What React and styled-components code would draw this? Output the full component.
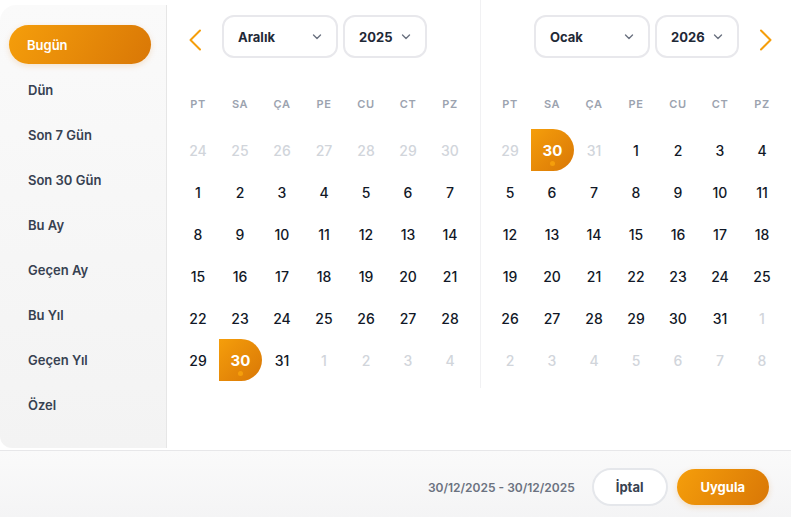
import React from "react";
import styled, { createGlobalStyle } from "styled-components";

const GlobalStyle = createGlobalStyle`
  html, body { margin: 0; padding: 0; background: #ffffff; }
  body { font-family: Inter, "Noto Sans", "Liberation Sans", sans-serif; -webkit-font-smoothing: antialiased; }
  * { box-sizing: border-box; }
`;

const Picker = styled.div`
  width: 791px;
  height: 517px;
  display: flex;
  flex-direction: column;
  background: #ffffff;
  overflow: hidden;
`;

const Body = styled.div`
  height: 450px;
  display: flex;
  align-items: flex-start;
`;

const Sidebar = styled.nav`
  width: 167px;
  height: 443px;
  margin-top: 5px;
  border-radius: 16px 0 0 12px;
  border-right: 1px solid #e6e6e6;
  background: linear-gradient(180deg, #fafafa 0%, #f3f3f3 100%);
  padding: 20px 15px 0 9px;
  display: flex;
  flex-direction: column;
  gap: 6px;
`;

const Preset = styled.button`
  height: 39px;
  border: none;
  border-radius: 20px;
  padding: 0 0 0 ${(p) => (p.$active ? 18 : 19)}px;
  text-align: left;
  font-family: inherit;
  font-size: 13px;
  font-weight: 600;
  cursor: pointer;
  color: ${(p) => (p.$active ? "#ffffff" : "#374151")};
  background: ${(p) =>
    p.$active ? "linear-gradient(120deg, #f59e0b 0%, #d97706 100%)" : "transparent"};
  box-shadow: ${(p) => (p.$active ? "0 2px 6px rgba(217, 119, 6, 0.18)" : "none")};
`;

const Months = styled.div`
  display: flex;
  align-items: flex-start;
`;

const MonthPanel = styled.section`
  width: ${(p) => p.$width}px;
  padding: 15px 0 7px ${(p) => p.$padLeft}px;
  border-right: ${(p) => (p.$divider ? "1px solid #f1f1f3" : "none")};
`;

const Header = styled.div`
  width: 295px;
  height: 43px;
  display: flex;
  align-items: center;
  margin-bottom: 31px;
`;

const NavButton = styled.button`
  width: 36px;
  height: 36px;
  margin-top: 7px;
  border: none;
  background: transparent;
  padding: 0;
  display: flex;
  align-items: center;
  justify-content: center;
  cursor: pointer;
  visibility: ${(p) => (p.$hidden ? "hidden" : "visible")};
`;

const Select = styled.div`
  width: ${(p) => p.$width}px;
  height: 43px;
  margin-left: ${(p) => p.$gap}px;
  border: 2px solid #e8e8ec;
  border-radius: 12px;
  background: #ffffff;
  padding: 0 14px 0 14px;
  display: flex;
  align-items: center;
  justify-content: space-between;
  font-size: 13px;
  font-weight: 700;
  color: #1f2937;
`;

const Spacer = styled.div`
  width: 9px;
`;

const Grid = styled.div`
  width: 294px;
  display: grid;
  grid-template-columns: repeat(7, 42px);
`;

const Weekday = styled.div`
  height: 30px;
  margin-bottom: 10px;
  display: flex;
  align-items: center;
  justify-content: center;
  font-size: 11px;
  font-weight: 600;
  letter-spacing: 0.6px;
  color: #9ca3af;
`;

const Day = styled.div`
  position: relative;
  height: 42px;
  display: flex;
  align-items: center;
  justify-content: center;
  font-size: ${(p) => (p.$selected ? 15 : 14)}px;
  font-weight: ${(p) => (p.$selected ? 700 : 500)};
  color: ${(p) => (p.$selected ? "#ffffff" : p.$muted ? "#d1d5db" : "#111827")};
  background: ${(p) =>
    p.$selected ? "linear-gradient(135deg, #f59e0b 0%, #d97706 100%)" : "transparent"};
  border-radius: ${(p) => (p.$selected ? "0 21px 21px 0" : "0")};
  margin-right: ${(p) => (p.$selected ? -1 : 0)}px;
`;

const TodayDot = styled.span`
  position: absolute;
  left: 50%;
  bottom: 5px;
  width: 5px;
  height: 5px;
  margin-left: -2.5px;
  border-radius: 50%;
  background: #f59e0b;
`;

const Footer = styled.footer`
  height: 67px;
  border-top: 1px solid #e7e7e9;
  background: linear-gradient(180deg, #fafafa 0%, #f4f4f5 100%);
  display: flex;
  align-items: center;
  justify-content: flex-end;
  padding: 6px 22px 0 0;
`;

const RangeText = styled.span`
  font-size: 12px;
  font-weight: 600;
  color: #6b7280;
  margin-right: 17px;
`;

const FooterButton = styled.button`
  height: ${(p) => (p.$primary ? 36 : 38)}px;
  padding: 0 ${(p) => (p.$primary ? 24 : 22)}px;
  margin-left: ${(p) => (p.$primary ? 9 : 0)}px;
  border-radius: 20px;
  font-family: inherit;
  font-size: 13px;
  font-weight: 700;
  cursor: pointer;
  color: ${(p) => (p.$primary ? "#ffffff" : "#374151")};
  border: ${(p) => (p.$primary ? "none" : "2px solid #e5e7eb")};
  background: ${(p) =>
    p.$primary ? "linear-gradient(120deg, #f59e0b 0%, #d97706 100%)" : "#ffffff"};
  box-shadow: ${(p) => (p.$primary ? "0 2px 6px rgba(217, 119, 6, 0.2)" : "none")};
`;

const Chevron = ({ dir }) => (
  <svg width="16" height="22" viewBox="0 0 16 22" fill="none">
    <path
      d={dir === "left" ? "M13 1.5 L3.5 11 L13 20.5" : "M3 1.5 L12.5 11 L3 20.5"}
      stroke="#f59e0b"
      strokeWidth="2"
      strokeLinecap="round"
      strokeLinejoin="round"
    />
  </svg>
);

const Caret = () => (
  <svg width="10" height="6" viewBox="0 0 10 6" fill="none">
    <path d="M1.5 1 L5 4.5 L8.5 1" stroke="#6b7280" strokeWidth="1.4" strokeLinecap="round" strokeLinejoin="round" />
  </svg>
);

const WEEKDAYS = ["PT", "SA", "ÇA", "PE", "CU", "CT", "PZ"];
const PRESETS = ["Bugün", "Dün", "Son 7 Gün", "Son 30 Gün", "Bu Ay", "Geçen Ay", "Bu Yıl", "Geçen Yıl", "Özel"];

// 6x7 month grid starting on Monday; a month that starts on Monday
// still shows the full previous week in its first row
function buildDays(year, month) {
  const first = new Date(year, month, 1);
  const offset = ((first.getDay() + 6) % 7) || 7;
  const days = [];
  for (let i = 0; i < 42; i++) {
    const d = new Date(year, month, 1 - offset + i);
    days.push({
      key: i,
      date: d.getDate(),
      muted: d.getMonth() !== month,
      selected: d.getFullYear() === 2025 && d.getMonth() === 11 && d.getDate() === 30,
    });
  }
  return days;
}

const Month = ({ year, month, name, width, padLeft, divider, prev, next }) => (
  <MonthPanel $width={width} $padLeft={padLeft} $divider={divider}>
    <Header>
      <NavButton $hidden={!prev} aria-label="Önceki ay">
        <Chevron dir="left" />
      </NavButton>
      <Select $width={116} $gap={9}>
        {name}
        <Caret />
      </Select>
      <Select $width={84} $gap={5}>
        {year}
        <Caret />
      </Select>
      <Spacer />
      <NavButton $hidden={!next} aria-label="Sonraki ay">
        <Chevron dir="right" />
      </NavButton>
    </Header>
    <Grid>
      {WEEKDAYS.map((w) => (
        <Weekday key={w}>{w}</Weekday>
      ))}
      {buildDays(year, month).map((d) => (
        <Day key={d.key} $muted={d.muted && !d.selected} $selected={d.selected}>
          {d.date}
          {d.selected && <TodayDot />}
        </Day>
      ))}
    </Grid>
  </MonthPanel>
);

export default function App() {
  return (
    <>
      <GlobalStyle />
      <Picker>
        <Body>
          <Sidebar>
            {PRESETS.map((p, i) => (
              <Preset key={p} $active={i === 0}>
                {p}
              </Preset>
            ))}
          </Sidebar>
          <Months>
            <Month year={2025} month={11} name="Aralık" width={314} padLeft={10} divider prev />
            <Month year={2026} month={0} name="Ocak" width={310} padLeft={8} next />
          </Months>
        </Body>
        <Footer>
          <RangeText>30/12/2025 - 30/12/2025</RangeText>
          <FooterButton>İptal</FooterButton>
          <FooterButton $primary>Uygula</FooterButton>
        </Footer>
      </Picker>
    </>
  );
}
